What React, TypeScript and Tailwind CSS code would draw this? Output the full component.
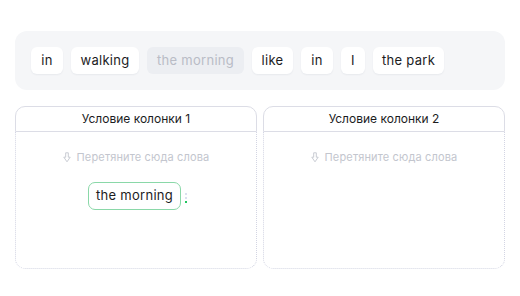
import React from "react";

const words = [
  { t: "in", w: "w-[32px]" },
  { t: "walking", w: "w-[68px]" },
  { t: "the morning", w: "w-[97px]", used: true },
  { t: "like", w: "w-[41px]" },
  { t: "in", w: "w-[32px]" },
  { t: "I", w: "w-[24px]" },
  { t: "the park", w: "w-[71px]" },
];

function Hint() {
  return (
    <div className="flex items-center justify-center gap-[6px] text-[11px] leading-[14px] text-[#c3c6ce]">
      <svg width="8" height="11" viewBox="0 0 8 11" fill="none">
        <path
          d="M2.7 0.8 H5.3 V5.2 H7.2 L4 9.8 L0.8 5.2 H2.7 Z"
          stroke="#c3c6ce"
          strokeWidth="0.9"
          strokeLinejoin="round"
        />
      </svg>
      <span className="tracking-[0.15px]">Перетяните сюда слова</span>
    </div>
  );
}

function Column({ title, children }: { title: string; children?: React.ReactNode }) {
  return (
    <div className="flex flex-col">
      <div className="h-[26px] flex items-center justify-center rounded-t-[10px] border border-[#dcdde6] text-[12px] text-[#1c1c1e]">
        {title}
      </div>
      <div className="h-[137px] rounded-b-[10px] border border-t-0 border-dotted border-[#d3d5e3] pt-[18px] flex flex-col items-center">
        <Hint />
        {children}
      </div>
    </div>
  );
}

export default function App() {
  return (
    <div
      className="w-[520px] h-[296px] bg-white px-[15px] pt-[31px]"
      style={{ fontFamily: "Inter, 'Noto Sans', sans-serif" }}
    >
      <div className="h-[59px] rounded-[12px] bg-[#f5f6f8] px-4 flex items-center gap-2">
        {words.map((w, i) =>
          w.used ? (
            <div
              key={i}
              className={`${w.w} h-[27px] rounded-[6px] bg-[#eceef2] flex items-center justify-center text-[13px] tracking-[0.3px] text-[#b9bcc6]`}
            >
              {w.t}
            </div>
          ) : (
            <div
              key={i}
              className={`${w.w} h-[27px] rounded-[6px] bg-white flex items-center justify-center text-[13px] tracking-[0.3px] text-[#1c1c1e] shadow-[0_1px_2px_rgba(20,30,60,0.06)]`}
            >
              {w.t}
            </div>
          )
        )}
      </div>
      <div className="mt-4 grid grid-cols-2 gap-[6px]">
        <Column title="Условие колонки 1">
          <div className="mt-[18px] flex items-center gap-[4px] pl-[3px]">
            <div className="w-[93px] h-[28px] rounded-[7px] border border-[#8ad8a8] bg-white flex items-center justify-center text-[13px] tracking-[0.3px] text-[#1c1c1e]">
              the morning
            </div>
            <div className="flex flex-col gap-[2px] mt-[4px]">
              <div className="w-[2px] h-[2px] bg-[#dcdff0]" />
              <div className="w-[2px] h-[2px] bg-[#dcdff0]" />
              <div className="w-[2px] h-[2px] bg-[#22c55e]" />
            </div>
          </div>
        </Column>
        <Column title="Условие колонки 2" />
      </div>
    </div>
  );
}
